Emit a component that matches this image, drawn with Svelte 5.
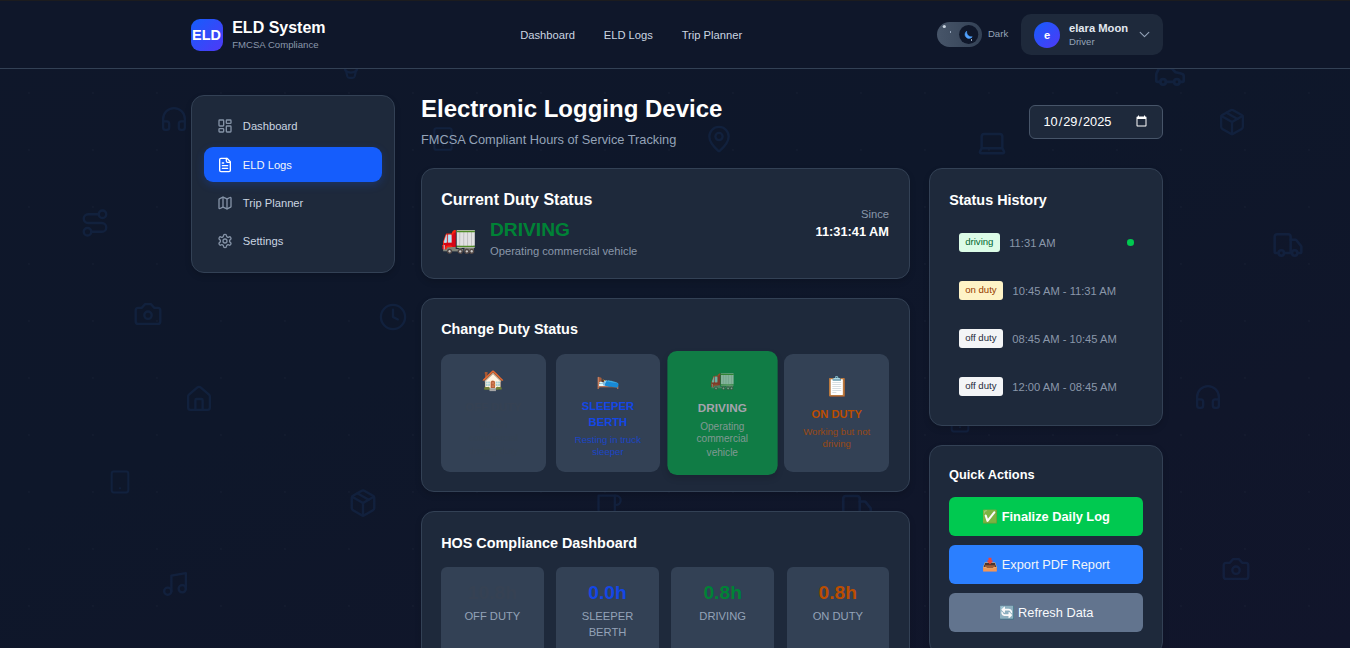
<script>
  const icons = {
    dashboard: '<rect width="7" height="9" x="3" y="3" rx="1"/><rect width="7" height="5" x="14" y="3" rx="1"/><rect width="7" height="9" x="14" y="12" rx="1"/><rect width="7" height="5" x="3" y="16" rx="1"/>',
    file: '<path d="M15 2H6a2 2 0 0 0-2 2v16a2 2 0 0 0 2 2h12a2 2 0 0 0 2-2V7Z"/><path d="M14 2v4a2 2 0 0 0 2 2h4"/><path d="M10 9H8"/><path d="M16 13H8"/><path d="M16 17H8"/>',
    map: '<path d="M14.106 5.553a2 2 0 0 0 1.788 0l3.659-1.83A1 1 0 0 1 21 4.619v12.764a1 1 0 0 1-.553.894l-4.553 2.277a2 2 0 0 1-1.788 0l-4.212-2.106a2 2 0 0 0-1.788 0l-3.659 1.83A1 1 0 0 1 3 19.381V6.618a1 1 0 0 1 .553-.894l4.553-2.277a2 2 0 0 1 1.788 0z"/><path d="M15 5.764v15"/><path d="M9 3.236v15"/>',
    settings: '<path d="M12.22 2h-.44a2 2 0 0 0-2 2v.18a2 2 0 0 1-1 1.73l-.43.25a2 2 0 0 1-2 0l-.15-.08a2 2 0 0 0-2.73.73l-.22.38a2 2 0 0 0 .73 2.73l.15.1a2 2 0 0 1 1 1.72v.51a2 2 0 0 1-1 1.74l-.15.09a2 2 0 0 0-.73 2.73l.22.38a2 2 0 0 0 2.73.73l.15-.08a2 2 0 0 1 2 0l.43.25a2 2 0 0 1 1 1.73V20a2 2 0 0 0 2 2h.44a2 2 0 0 0 2-2v-.18a2 2 0 0 1 1-1.73l.43-.25a2 2 0 0 1 2 0l.15.08a2 2 0 0 0 2.73-.73l.22-.39a2 2 0 0 0-.73-2.73l-.15-.08a2 2 0 0 1-1-1.74v-.5a2 2 0 0 1 1-1.74l.15-.09a2 2 0 0 0 .73-2.73l-.22-.38a2 2 0 0 0-2.73-.73l-.15.08a2 2 0 0 1-2 0l-.43-.25a2 2 0 0 1-1-1.73V4a2 2 0 0 0-2-2z"/><circle cx="12" cy="12" r="3"/>',
    headphones: '<path d="M3 14h3a2 2 0 0 1 2 2v3a2 2 0 0 1-2 2H5a2 2 0 0 1-2-2v-7a9 9 0 0 1 18 0v7a2 2 0 0 1-2 2h-1a2 2 0 0 1-2-2v-3a2 2 0 0 1 2-2h3"/>',
    route: '<circle cx="6" cy="19" r="3"/><path d="M9 19h8.5a3.5 3.5 0 0 0 0-7h-11a3.5 3.5 0 0 1 0-7H15"/><circle cx="18" cy="5" r="3"/>',
    camera: '<path d="M14.5 4h-5L7 7H4a2 2 0 0 0-2 2v9a2 2 0 0 0 2 2h16a2 2 0 0 0 2-2V9a2 2 0 0 0-2-2h-3l-2.5-3z"/><circle cx="12" cy="13" r="3"/>',
    home: '<path d="M15 21v-8a1 1 0 0 0-1-1h-4a1 1 0 0 0-1 1v8"/><path d="M3 10a2 2 0 0 1 .709-1.528l7-6a2 2 0 0 1 2.582 0l7 6A2 2 0 0 1 21 10v9a2 2 0 0 1-2 2H5a2 2 0 0 1-2-2z"/>',
    tablet: '<rect width="16" height="20" x="4" y="2" rx="2"/><path d="M12 18h.01"/>',
    music: '<path d="M9 18V5l12-2v13"/><circle cx="6" cy="18" r="3"/><circle cx="18" cy="16" r="3"/>',
    pin: '<path d="M20 10c0 5-5.539 10.193-7.399 11.799a1 1 0 0 1-1.202 0C9.539 20.193 4 15 4 10a8 8 0 0 1 16 0"/><circle cx="12" cy="10" r="3"/>',
    laptop: '<path d="M20 16V7a2 2 0 0 0-2-2H6a2 2 0 0 0-2 2v9m16 0H4m16 0 1.280 2.550a1 1 0 0 1-.9 1.450H3.620a1 1 0 0 1-.9-1.450L4 16"/>',
    car: '<path d="M19 17h2c.6 0 1-.4 1-1v-3c0-.9-.7-1.700-1.500-1.900C18.700 10.600 16 10 16 10s-1.300-1.400-2.200-2.300c-.5-.4-1.100-.7-1.800-.7H5c-.6 0-1.100.4-1.400.9l-1.400 2.900A3.700 3.700 0 0 0 2 12v4c0 .6.4 1 1 1h2"/><circle cx="7" cy="17" r="2"/><path d="M9 17h6"/><circle cx="17" cy="17" r="2"/>',
    box: '<path d="M11 21.730a2 2 0 0 0 2 0l7-4A2 2 0 0 0 21 16V8a2 2 0 0 0-1-1.730l-7-4a2 2 0 0 0-2 0l-7 4A2 2 0 0 0 3 8v8a2 2 0 0 0 1 1.730z"/><path d="M12 22V12"/><path d="M3.300 7 12 12l8.700-5"/><path d="m7.500 4.270 9 5.150"/>',
    truck: '<path d="M14 18V6a2 2 0 0 0-2-2H4a2 2 0 0 0-2 2v11a1 1 0 0 0 1 1h2"/><path d="M15 18H9"/><path d="M19 18h2a1 1 0 0 0 1-1v-3.650a1 1 0 0 0-.22-.624l-3.480-4.350A1 1 0 0 0 17.520 8H14"/><circle cx="17" cy="18" r="2"/><circle cx="7" cy="18" r="2"/>',
    clock: '<circle cx="12" cy="12" r="10"/><path d="M12 6v6l4 2"/>',
    coffee: '<path d="M17 4h1a4 4 0 1 1 0 8h-1"/><path d="M3 4h14v12a4 4 0 0 1-4 4H7a4 4 0 0 1-4-4Z"/>',
    cup: '<path d="M5.500 14l2 3 1.200 5q.4 1.500 2 1.500h2.600q1.600 0 2-1.500l1.200-5 2-3"/><path d="M7 17q5 3.500 10 0"/>'
  };

  const scenery = [
    ['headphones', 174, 119, 29], ['route', 94.500, 223, 30], ['camera', 148, 314, 29.500], ['home', 199, 398.500, 29],
    ['tablet', 119.500, 482, 25], ['music', 174.500, 584, 29], ['cup', 351, 65, 27], ['tablet', 443, 139, 26],
    ['pin', 719, 139, 29], ['laptop', 992, 143, 31], ['car', 1169.500, 75, 33], ['box', 1232, 122, 29],
    ['truck', 1288, 245, 32], ['headphones', 1208, 397, 29], ['camera', 1236, 569, 29.500], ['clock', 392.500, 316.500, 29],
    ['box', 363, 503, 30], ['coffee', 609, 505, 28], ['truck', 857, 507, 33], ['tablet', 960, 421, 25]
  ];

  const menu = [
    ['dashboard', 'Dashboard'], ['file', 'ELD Logs'], ['map', 'Trip Planner'], ['settings', 'Settings']
  ];

  const duties = [
    { cls: 'off', emoji: '🏠', name: 'OFF DUTY', desc: 'Not on commercial driving duty', hours: '10.8h' },
    { cls: 'sleeper', emoji: '🛌', name: 'SLEEPER BERTH', desc: 'Resting in truck sleeper', hours: '0.0h' },
    { cls: 'driving', emoji: '🚛', name: 'DRIVING', desc: 'Operating commercial vehicle', hours: '0.8h' },
    { cls: 'on', emoji: '📋', name: 'ON DUTY', desc: 'Working but not driving', hours: '0.8h' }
  ];

  const history = [
    ['driving', '11:31 AM', 'b-driving'], ['on duty', '10:45 AM - 11:31 AM', 'b-on'],
    ['off duty', '08:45 AM - 10:45 AM', 'b-off'], ['off duty', '12:00 AM - 08:45 AM', 'b-off']
  ];
</script>

{#snippet icon(name, size, stroke)}
  <svg width={size} height={size} viewBox="0 0 24 24" fill="none" stroke="currentColor" stroke-width={stroke} stroke-linecap="round" stroke-linejoin="round">{@html icons[name]}</svg>
{/snippet}

<div class="page">
  <div class="scenery">
    {#each scenery as [name, x, y, size]}
      <span class="float" style="left:{x}px;top:{y}px">{@render icon(name, size, 1.9)}</span>
    {/each}
  </div>

  <header>
    <div class="bar">
      <div class="brand">
        <div class="logo">ELD</div>
        <div>
          <div class="brand-name">ELD System</div>
          <div class="brand-sub">FMCSA Compliance</div>
        </div>
      </div>
      <nav><a>Dashboard</a><a>ELD Logs</a><a>Trip Planner</a></nav>
      <div class="right">
        <div class="toggle">
          <svg width="45" height="25" viewBox="0 0 45 25">
            <circle cx="7.300" cy="4.500" r="1.600" fill="#cbd5e1" />
            <rect x="13" y="9" width="1" height="2" fill="#94a3b8" />
            <circle cx="31.700" cy="12.500" r="9.600" fill="#0f172a" />
            <path d="M29.600 9.200C27.600 10.800 27.600 13.600 29.200 15.200C31 17 33.800 16.700 35.200 14.800C33 15.300 29.300 13.200 29.600 9.200Z" fill="#51a2ff" stroke="#51a2ff" stroke-width=".6" stroke-linejoin="round" />
            <rect x="34" y="17" width="1" height="2" fill="#94a3b8" />
          </svg>
        </div>
        <span class="mode">Dark</span>
        <div class="user">
          <div class="avatar">e</div>
          <div class="who"><div class="user-name">elara Moon</div><div class="role">Driver</div></div>
          <svg class="chev" width="13" height="13" viewBox="0 0 24 24" fill="none" stroke="currentColor" stroke-width="2" stroke-linecap="round" stroke-linejoin="round"><path d="M4 8l8 8 8-8" /></svg>
        </div>
      </div>
    </div>
  </header>

  <div class="layout">
    <aside class="card side">
      {#each menu as [name, label], i}
        <a class:active={i === 1}>{@render icon(name, 16, 2)}<span>{label}</span></a>
      {/each}
    </aside>

    <main>
      <div class="heading">
        <div>
          <h1>Electronic Logging Device</h1>
          <p>FMCSA Compliant Hours of Service Tracking</p>
        </div>
        <input type="date" value="2025-10-29" />
      </div>

      <div class="columns">
        <div class="col">
          <section class="card current">
            <div>
              <h2>Current Duty Status</h2>
              <div class="now">
                <span class="truck">🚛</span>
                <div><div class="state">DRIVING</div><div class="muted">Operating commercial vehicle</div></div>
              </div>
            </div>
            <div class="since"><div class="muted">Since</div><div class="time">11:31:41 AM</div></div>
          </section>

          <section class="card">
            <h3>Change Duty Status</h3>
            <div class="duties">
              {#each duties as d}
                <button class="duty {d.cls}">
                  <span class="emoji">{d.emoji}</span>
                  <span class="name">{d.name}</span>
                  <span class="desc">{d.desc}</span>
                </button>
              {/each}
            </div>
          </section>

          <section class="card hos">
            <h3>HOS Compliance Dashboard</h3>
            <div class="hours">
              {#each duties as d}
                <div class="tile {d.cls}"><div class="num">{d.hours}</div><div class="label">{d.name}</div></div>
              {/each}
            </div>
          </section>
        </div>

        <div class="col">
          <section class="card history">
            <h3>Status History</h3>
            {#each history as [label, time, cls], i}
              <div class="entry">
                <span class="badge {cls}">{label}</span><span class="muted">{time}</span>
                {#if i === 0}<i></i>{/if}
              </div>
            {/each}
          </section>
          <section class="card quick">
            <h4>Quick Actions</h4>
            <button class="green">✅ Finalize Daily Log</button>
            <button class="blue">📥 Export PDF Report</button>
            <button class="slate">🔄 Refresh Data</button>
          </section>
        </div>
      </div>
    </main>
  </div>
</div>

<style>
  :global(body) { margin: 0; overflow: hidden; background: #0f172a; }
  * { box-sizing: border-box; }
  h1, h2, h3, h4, p { margin: 0; }
  svg { display: block; flex: none; overflow: visible; }
  button { font: inherit; border: 0; }
  .page {
    position: relative; height: 648px; overflow: hidden; color: #fff;
    font-family: "Liberation Sans", Arial, sans-serif; font-size: 11.2px; line-height: 16px;
    background: radial-gradient(circle at 28.8px 24px, rgba(71, 85, 105, .08) .8px, transparent 1.2px) 0 69px / 64px 57px,
      linear-gradient(160deg, #0f172a 0%, #0e172a 45%, #10162a 75%, #11152b 100%);
  }
  .scenery { position: absolute; inset: 0; color: #1d4687; opacity: .21; }
  .float { position: absolute; transform: translate(-50%, -50%); }
  header { position: relative; height: 69px; background: #0f172a; border-top: 1px solid #1c1c1e; border-bottom: 1px solid #334155; }
  .bar { width: 972px; height: 67px; margin: 0 auto 0 191px; display: grid; grid-template-columns: 329.200px 1fr auto; align-items: center; }
  .brand { display: flex; align-items: center; gap: 9.200px; }
  .logo {
    width: 32px; height: 32px; margin-top: 1px; border-radius: 9px; display: grid; place-items: center; padding-right: 1px;
    font-weight: 700; font-size: 14.400px; background: linear-gradient(135deg, #155dfc, #4f39f6);
  }
  .brand-name { font-size: 16px; line-height: 20px; font-weight: 700; }
  .brand-sub { margin-top: 1px; font-size: 9.600px; line-height: 12.800px; color: #8a98ac; }
  nav { display: flex; gap: 28.800px; color: #cbd5e1; }
  .right { display: flex; align-items: center; }
  .toggle { width: 45px; height: 25px; border-radius: 13px; background: linear-gradient(90deg, #475569, #334155); }
  .mode { margin: -2px 12.800px 0 6px; font-size: 9.600px; color: #94a3b8; }
  .user { width: 142px; height: 41px; padding-left: 13px; display: flex; align-items: center; border-radius: 10px; background: #1e293b; }
  .avatar {
    width: 26px; height: 26px; border-radius: 50%; display: grid; place-items: center;
    background: linear-gradient(135deg, #155dfc, #4f39f6); font-weight: 700;
  }
  .who { width: 69px; margin-left: 9px; white-space: nowrap; }
  .user-name { font-weight: 700; line-height: 14px; color: #e2e8f0; }
  .role { font-size: 9.600px; line-height: 12.800px; color: #94a3b8; position: relative; top: 1px; }
  .chev { color: #94a3b8; }
  .layout { position: relative; display: grid; grid-template-columns: 204px 742px; gap: 26px; padding: 26px 0 0 191px; align-items: start; }
  .card { background: #1e293b; border: 1px solid #334155; border-radius: 13px; padding: 19.200px 20px 19.200px 19.200px; box-shadow: 0 3px 6px rgba(0, 0, 0, .14); }
  .side { height: 178px; padding: 12px; display: flex; flex-direction: column; gap: 3px; color: #cbd5e1; }
  .side a { height: 35px; padding-left: 13px; display: flex; align-items: center; gap: 9.800px; border-radius: 9px; }
  .side a:first-child { margin-bottom: 1px; }
  .side a svg { color: #8492a6; }
  .side .active { background: #155dfc; color: #f1f5f9; box-shadow: 0 3px 8px rgba(21, 93, 252, .22); }
  .side .active svg { color: #fff; }
  .heading { height: 73px; display: flex; justify-content: space-between; align-items: flex-start; }
  h1 { font-size: 24px; line-height: 28.800px; font-weight: 700; }
  .heading p { margin-top: 6.400px; font-size: 12.800px; line-height: 19.200px; color: #94a3b8; }
  input {
    width: 134px; height: 34px; margin: 10px 0 0; padding: 5px 12px 6.400px 12.400px; border: 1px solid #475569; border-radius: 6px;
    background: #1e293b; color: #fff; font: 12.800px "Liberation Sans", Arial, sans-serif; color-scheme: dark;
  }
  .columns { display: grid; grid-template-columns: 489px 234px; gap: 19px; }
  .col { display: flex; flex-direction: column; gap: 19px; }
  .current { height: 111px; display: flex; align-items: center; justify-content: space-between; }
  h2 { font-size: 16px; line-height: 22px; font-weight: 700; }
  .now { display: flex; align-items: center; gap: 12.800px; margin-top: 6px; }
  .now .muted { position: relative; top: 1px; }
  .truck { font-size: 28.800px; line-height: 32px; }
  .state { font-size: 19.200px; line-height: 25.600px; font-weight: 700; color: #008236; }
  .muted { font-size: 11.200px; line-height: 16px; color: #8a97aa; }
  .since { text-align: right; }
  .time { font-size: 12.800px; line-height: 19.200px; font-weight: 700; }
  h3 { font-size: 14.400px; line-height: 22.400px; font-weight: 700; }
  .duties { display: grid; grid-template-columns: repeat(4, 1fr); gap: 9.800px; margin-top: 13.200px; }
  .duty {
    height: 118px; padding: 0 13.400px; border-radius: 9px; background: #334155; text-align: center;
    display: flex; flex-direction: column; justify-content: center; align-items: center;
  }
  .emoji { font-size: 19.200px; line-height: 25.600px; color: #fff; position: relative; top: -1px; }
  .name { margin-top: 4px; font-weight: 700; line-height: 16px; position: relative; top: 1px; }
  .desc { margin-top: 3.800px; font-size: 9.600px; line-height: 12.800px; opacity: .75; position: relative; top: 1px; }
  .off { color: #364153; }
  .sleeper { color: #1447e6; }
  .on { color: #bb4d00; }
  .tile.driving { color: #008236; }
  .duty.driving { background: #107c45; color: #a5a3ad; transform: scale(1.05); box-shadow: 0 3px 6px rgba(0, 0, 0, .12); }
  .duty.driving .emoji { opacity: .55; }
  .hos h3 { position: relative; top: 1px; }
  .hours { display: grid; grid-template-columns: repeat(4, 1fr); gap: 12.800px; margin-top: 13.200px; }
  .tile { height: 120px; padding: 12.800px; border-radius: 6px; background: #334155; text-align: center; }
  .num { font-size: 19.200px; line-height: 25.600px; font-weight: 700; }
  .label { margin-top: 3.200px; color: #94a3b8; }
  .history { height: 258px; }
  .history h3 { margin-bottom: 12.800px; position: relative; top: 1px; }
  .entry { height: 38.400px; margin-bottom: 9.600px; padding: 0 9.600px; display: flex; align-items: center; gap: 9.400px; border-radius: 6px; }
  .badge { height: 19px; padding: 0 6.400px; border-radius: 3px; font-size: 9.600px; line-height: 18px; }
  .b-driving { color: #016630; background: #dcfce7; }
  .b-on { color: #973c00; background: #fef3c6; }
  .b-off { color: #1e2939; background: #f3f4f6; }
  .entry i { width: 7px; height: 6.400px; border-radius: 50%; background: #00c950; margin: 0 -1.400px 0 auto; }
  .quick { height: 210px; padding: 19.200px 19px; }
  h4 { font-size: 12.800px; line-height: 19.200px; margin-bottom: 12.400px; }
  .quick button { display: block; width: 100%; height: 39px; margin-bottom: 9px; padding: 2px 0 0; border-radius: 6px; color: #fff; font-size: 12.800px; }
  .quick .green { background: #00c950; font-weight: 700; }
  .quick .blue { background: #2b7fff; color: #f1f5f9; }
  .quick .slate { background: #62748e; color: #f8fafc; }
</style>
